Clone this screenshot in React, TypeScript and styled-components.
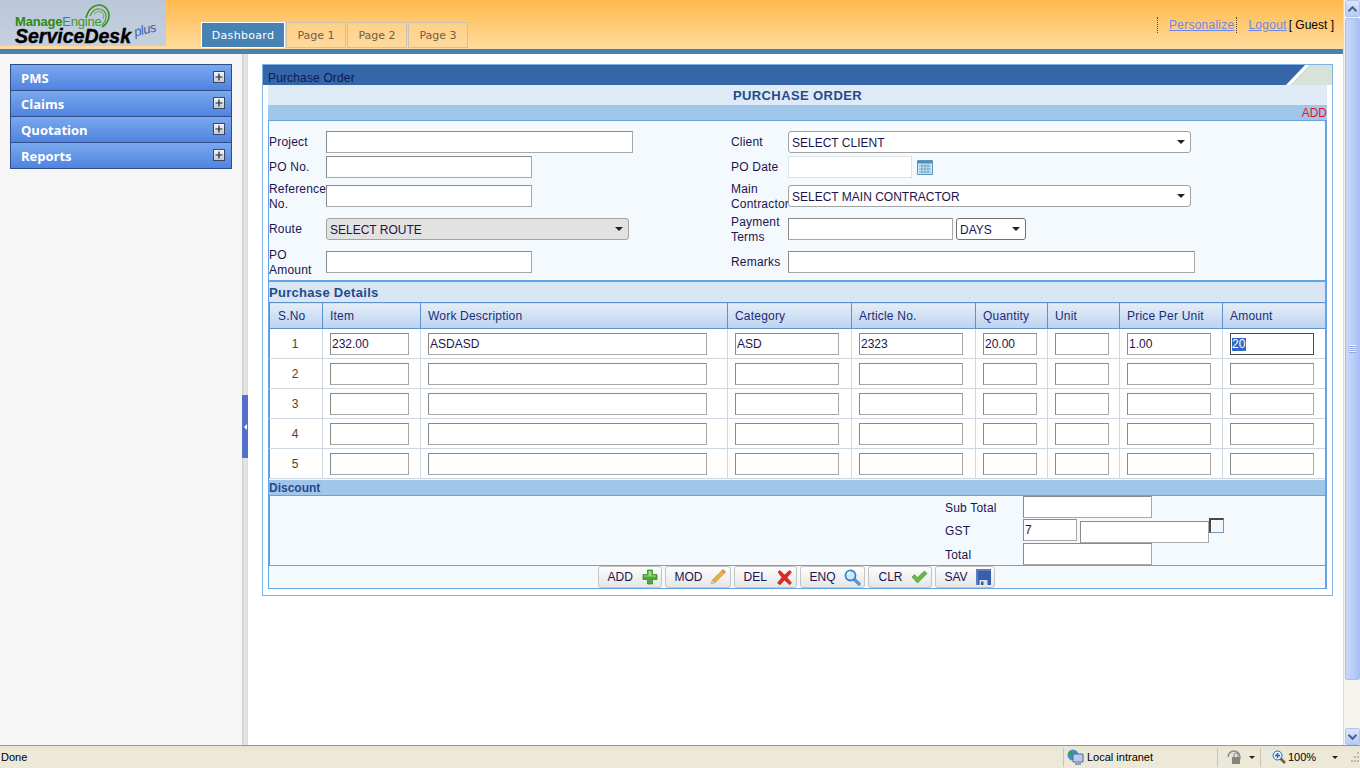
import React from "react";
import styled, { createGlobalStyle } from "styled-components";

const Global = createGlobalStyle`
  html, body { margin: 0; padding: 0; height: 100%; overflow: hidden; background: #fff; }
  body { font-family: "Liberation Sans", Arial, sans-serif; font-size: 12px; color: #1c1450; }
  * { box-sizing: border-box; }
`;

const Screen = styled.div`
  width: 1360px; height: 768px; display: flex; flex-direction: column; overflow: hidden;
`;
const Upper = styled.div`flex: none; height: 745px; display: flex;`;
const Page = styled.div`flex: none; width: 1343px; height: 745px; display: flex; flex-direction: column;`;

const Header = styled.header`
  flex: none; height: 54px; display: flex; align-items: flex-start;
  background: linear-gradient(#ffb94d, #ffdc9e 49px);
  border-bottom: 5px solid #4682b4;
`;
const LogoBox = styled.div`
  flex: none; position: relative; width: 166px; height: 46px; background: linear-gradient(#b9c7da, #c6d0de);
  color: #000; overflow: hidden;
`;
const LogoTop = styled.span`
  position: absolute; left: 15px; top: 16px; font: 700 13px/12px "Liberation Sans", sans-serif;
  color: #2f8a12; letter-spacing: -0.2px;
`;
const LogoTopLight = styled.span`font-weight: 400; color: #3f9a1c;`;
const LogoMain = styled.span`
  position: absolute; left: 15px; top: 28px; font: italic 700 19.5px/17px "Liberation Sans", sans-serif;
  color: #000; -webkit-text-stroke: 0.4px #000;
`;
const LogoPlus = styled.span`
  position: absolute; left: 134px; top: 23px; font: italic 400 13px/14px "Liberation Sans", sans-serif;
  color: #3a63b0; letter-spacing: -0.5px; transform: rotate(-14deg);
`;
const LogoArc = styled.svg`position: absolute; left: 80px; top: 3px;`;

const Tabs = styled.nav`flex: none; display: flex; gap: 1px; margin: 22px 0 0 35px;`;
const Tab = styled.div<{ $active?: boolean }>`
  height: 26px; display: flex; align-items: center; justify-content: center;
  font: 11px "DejaVu Sans", Verdana, sans-serif;
  padding-top: 1px;
  width: ${p => p.$active ? 84 : 60}px;
  ${p => p.$active
    ? "background:#4682b4;color:#fff;border:1px solid #fff;letter-spacing:.3px;"
    : "background:linear-gradient(#ffd08a,#ffd99c);color:#6f5f48;border:1px solid #c9c3ae;"}
`;
const TopLinks = styled.div`
  margin-left: auto; margin-top: 17px; padding-right: 9px; display: flex; align-items: center;
  height: 16px; color: #000; font-size: 12px;
`;
const Dotted = styled.span`
  display: block; width: 1px; height: 16px; border-left: 1px dotted #5b4a25;
`;
const TopLink = styled.a`
  color: #6e86e8; text-decoration: underline; margin: 0 2px 0 11px; letter-spacing: 0.25px;
`;

const Main = styled.div`flex: 1; min-height: 0; display: flex;`;
const Sidebar = styled.aside`flex: none; width: 242px; background: #f6f6f6; padding: 10px 0 0 10px;`;
const Accordion = styled.div`
  width: 222px; border: 1px solid #2f4d86; border-bottom: 0; background: #2f4d86;
  display: flex; flex-direction: column;
`;
const AccItem = styled.div`
  height: 26px; display: flex; align-items: center; justify-content: space-between;
  padding: 0 6px 0 10px;
  background: linear-gradient(#7aa9ee, #4f83e0);
  border-bottom: 1px solid #2f4d86;
  color: #fff; font: 700 13px "Open Sans", sans-serif;
`;
const PlusBox = styled.span`
  width: 12px; height: 12px; margin-top: -1px; background: linear-gradient(#f4f6fa, #c4cada); border: 1px solid #3c4660;
  display: flex; align-items: center; justify-content: center;
`;
const Splitter = styled.div`
  flex: none; position: relative; width: 6px;
  background: linear-gradient(90deg, #cfcfcf, #e8e8e8 50%, #dadada);
`;
const SplitHandle = styled.div`
  position: absolute; left: 0; top: 341px; width: 6px; height: 63px; background: #5470c8;
  display: flex; align-items: center; justify-content: center;
`;
const Arrow = styled.span`
  width: 0; height: 0; border: 3px solid transparent; border-left: 0; border-right: 3px solid #fff;
`;

const Content = styled.main`flex: 1; min-width: 0; padding: 10px 10px 0 14px; background: #fff;`;
const Panel = styled.section`
  width: 1071px; height: 532px; border: 1px solid #7fb2e5; padding: 0 5px; background: #fff;
`;
const TitleBar = styled.div`
  height: 20px; margin: 0 -5px; background: #3566a8; color: #0f1a4a; position: relative;
  font-size: 12px; line-height: 26px; padding-left: 5px; overflow: hidden; letter-spacing: 0.15px;
`;
const TitleCorner = styled.svg`position: absolute; right: 0; top: 0;`;
const FormHead = styled.div`
  height: 20px; padding-top: 1px; background: #deeaf5; color: #254a8c; font: 700 13px/20px "Liberation Sans", sans-serif;
  text-align: center; letter-spacing: 0.4px;
`;
const AddBar = styled.div`
  height: 15px; padding-top: 1px; background: #a0c6ea; color: #ff0a28; font-size: 12px; line-height: 15px; text-align: right;
`;
const FormBody = styled.div`
  height: 469px; border: 1px solid #62a5e2; border-right-width: 2px; background: #f4f9fd;
  display: flex; flex-direction: column; overflow: hidden;
`;
const FormGrid = styled.div`
  flex: none; height: 159px; padding-top: 10px;
  display: grid; grid-template-columns: 462px 1fr; grid-template-rows: 25px 29px 33px 33px 29px;
`;
const Field = styled.div`display: flex; align-items: center; height: 22px;`;
const Label = styled.label<{ $two?: boolean }>`
  flex: none; width: 57px; line-height: 15px; color: #1c1450; white-space: pre; letter-spacing: 0.2px;
  ${p => p.$two ? "padding-top: 2px;" : ""}
`;
const Text = styled.input<{ $w: number; $soft?: boolean }>`
  flex: none; width: ${p => p.$w}px; height: 22px; padding: 1px; margin: 0;
  background: #fff; border: 1px solid ${p => p.$soft ? "#dbe2e8" : "#a8a8a8"};
  border-top-color: ${p => p.$soft ? "#dbe2e8" : "#8a8a8a"}; border-left-color: ${p => p.$soft ? "#dbe2e8" : "#8a8a8a"};
  font: 12px "Liberation Sans", sans-serif; color: #1c1450; border-radius: 0; outline: none;
`;
const Select = styled.div<{ $w: number; $grey?: boolean; $dark?: boolean }>`
  flex: none; position: relative; width: ${p => p.$w}px; height: 22px; border-radius: 3px; padding: 1px 0 0 3px;
  display: flex; align-items: center; color: #1c1450;
  border: 1px solid ${p => p.$dark ? "#707070" : "#a3a3a3"};
  background: ${p => p.$grey ? "#e2e2e2" : "#fff"};
`;
const DaysSelect = styled(Select)`margin-left: 3px;`;
const Caret = styled.span`
  position: absolute; right: 5px; top: 8px; width: 0; height: 0;
  border: 4px solid transparent; border-top: 4px solid #222; border-bottom: 0;
`;
const Cal = styled.svg`flex: none; margin-left: 5px;`;

const SectionBand = styled.div`
  flex: none; height: 22px; background: #d9e7f5; border-top: 2px solid #62a5e2;
  color: #254a8c; font: 700 13px/21px "Liberation Sans", sans-serif; letter-spacing: 0.3px;
`;
const Table = styled.table`
  flex: none; width: 1056px; border-collapse: collapse; table-layout: fixed; background: #fff;
`;
const Th = styled.th`
  height: 26px; padding: 0 0 0 7px; text-align: left; letter-spacing: 0.2px;
  &:first-child { padding-left: 8px; }
  font: 12px "Liberation Sans", sans-serif; color: #1c2c78;
  background: linear-gradient(#e4edf8, #bcd3ef); border: 1px solid #5f90cc;
`;
const Td = styled.td<{ $center?: boolean }>`
  height: 30px; padding: 0 0 0 7px; border: 1px solid #ced8e2;
  &:first-child { border-left: 1px solid #6d99c9; }
  &:last-child { border-right: 1px solid #6d99c9; }
  text-align: ${p => p.$center ? "center" : "left"};
  ${p => p.$center ? "padding:0 2px 0 0;color:#5a3d28;" : ""}
`;
const CellInput = styled(Text)<{ $focus?: boolean }>`
  display: block;
  ${p => p.$focus ? "border:1px solid #4a4a4a;" : ""}
`;
const Selected = styled.span`
  position: absolute; left: 2px; top: 5px; height: 13px; padding: 0 1px 0 0; line-height: 13px;
  background: #316ac5; color: #fff;
`;
const CellWrap = styled.div`position: relative; width: 84px; height: 22px;`;

const DiscountBand = styled.div`
  flex: none; height: 16px; padding-top: 1px; background: #a0c6ea; color: #254a8c; margin-top: 1px;
  font-weight: 700; font-size: 12px; line-height: 15px; border-bottom: 1px solid #62a5e2;
`;
const Totals = styled.div`
  flex: none; height: 70px; background: #f4f9fd; border-left: 1px solid #6d99c9;
  border-bottom: 1px solid #62a5e2; padding: 0 0 0 675px;
  display: grid; grid-template-columns: 78px auto; grid-template-rows: 23px 24px 22px; justify-content: start; align-items: start;
`;
const TotLabel = styled.span`color: #1c1450; padding-top: 1px; line-height: 22px; letter-spacing: 0.2px;`;
const GstRow = styled.div`display: flex; position: relative; align-items: flex-start; gap: 3px;`;
const GstSecond = styled(Text)`margin-top: 2px;`;
const Check = styled.span`
  position: absolute; left: 186px; top: -1px; width: 15px; height: 15px; background: #f4f7fa;
  border: 1px solid #6d99c9; border-top: 2px solid #4a4a40; border-left: 2px solid #4a4a40;
`;
const Buttons = styled.div`
  flex: none; height: 22px; display: flex; justify-content: center; gap: 3px; background: #f4f9fd; padding-right: 2px;
`;
const Btn = styled.button<{ $w: number; $pad: number }>`
  width: ${p => p.$w}px; height: 22px; margin: 0; padding: 0 3px 0 ${p => p.$pad}px; display: flex; align-items: center; justify-content: space-between;
  border: 1px solid #c4c4c4; border-radius: 3px; background: linear-gradient(#fdfdfd, #e6e6e6);
  font: 12px "Liberation Sans", sans-serif; color: #1c1450;
  svg { flex: none; }
`;

const StatusBar = styled.footer`
  flex: none; height: 23px; width: 1360px; display: flex; align-items: center; color: #000; font: 11px/1 "Liberation Sans", "DejaVu Sans", sans-serif;
  background: linear-gradient(#e8e4d4, #ece9d8 6px); border-top: 1px solid #9c9888;
`;
const StatusLeft = styled.span`flex: none; width: 1063px; padding: 1px 0 0 1px; font-size: 11px;`;
const Zone = styled.div<{ $w: number; $pad: number }>`
  flex: none; width: ${p => p.$w}px; height: 19px; display: flex; align-items: center; gap: 2px; padding-left: ${p => p.$pad}px;
  border-left: 1px solid #c8c5b4;
`;
const SmallCaret = styled.span<{ $ml: number }>`
  width: 0; height: 0; margin-left: ${p => p.$ml}px; border: 3px solid transparent; border-top: 3px solid #222; border-bottom: 0;
`;
const GripCorner = styled.svg`flex: none;`;

const Scroll = styled.div`
  flex: none; width: 17px; height: 745px; background: #f5f3ee; display: flex; flex-direction: column;
  border-left: 1px solid #dddad0;
`;
const ScrollBtn = styled.div`
  flex: none; height: 17px; margin: 0 0 0 1px; background: linear-gradient(#dbe6fd, #b6cbf8); border: 1px solid #f0f4ff;
  outline: 1px solid #b0c4ee; outline-offset: -1px; border-radius: 2px; display: flex; align-items: center; justify-content: center;
`;
const Thumb = styled.div`
  flex: none; height: 662px; margin: 1px 0 0 1px; border-radius: 2px; border: 1px solid #a9bff0;
  background: linear-gradient(90deg, #c8d7fb, #b9ccf9 60%, #a9bff3); display: flex; align-items: center; justify-content: center;
`;
const Grip = styled.div`
  width: 7px; height: 8px;
  background: repeating-linear-gradient(#eef3ff 0 1px, #8ca6e4 1px 2px);
`;
const ScrollTrack = styled.div`flex: 1;`;

const Chevron = ({ up }: { up?: boolean }) => (
  <svg width="11" height="8" viewBox="0 0 11 8">
    <path d={up ? "M1.5 6.2 5.5 2.2 9.5 6.2" : "M1.5 1.8 5.5 5.8 9.5 1.8"} fill="none" stroke="#4d6185" strokeWidth="2" />
  </svg>
);

const Plus = () => (
  <svg width="8" height="8" viewBox="0 0 8 8"><path d="M4 .5v7M.5 4h7" stroke="#222" strokeWidth="1.2" /></svg>
);

const AddIcon = () => (
  <svg width="16" height="16" viewBox="0 0 16 16">
    <path d="M5.5 1h5v4.500H15v5h-4.500V15h-5v-4.500H1v-5h4.500z" fill="#4fa63a" stroke="#3c8a2c" strokeWidth=".8" />
    <path d="M6.500 2h3v4.500H14v1H2v-1h4.500z" fill="#9bdc7e" />
  </svg>
);
const ModIcon = () => (
  <svg width="18" height="18" viewBox="0 0 18 18">
    <path d="M14 1.500 16.500 4 6 14.500 3.500 12z" fill="#f0b13c" stroke="#b9812a" strokeWidth=".7" />
    <path d="M14 1.500 16.500 4 15 5.500 12.500 3z" fill="#e0857a" />
    <path d="M3.500 12 6 14.500 2 16z" fill="#efd7b0" stroke="#9a8a70" strokeWidth=".5" />
  </svg>
);
const DelIcon = () => (
  <svg width="17" height="17" viewBox="0 0 17 17">
    <path d="M2 3 4 1.500 8.500 6 13.500 1.500 15.500 3 11 8.500 15.500 14 13.500 15.800 8.500 11 4 15.800 1.500 14 6 8.500z" fill="#e02a20" stroke="#a81a12" strokeWidth=".6" />
  </svg>
);
const EnqIcon = () => (
  <svg width="17" height="17" viewBox="0 0 17 17">
    <path d="M10.500 10.500 15 15" stroke="#5a96d0" strokeWidth="3.400" strokeLinecap="round" />
    <circle cx="6.500" cy="6.500" r="5" fill="#cfe9fb" stroke="#2f86d8" strokeWidth="1.800" />
    <path d="M3.500 6a3 3 0 0 1 3-3" stroke="#fff" strokeWidth="1.300" fill="none" />
  </svg>
);
const ClrIcon = () => (
  <svg width="17" height="14" viewBox="0 0 17 14">
    <path d="M1 7 3.500 4.500 6.500 7.500 13.500 1 16 3.500 6.500 13z" fill="#64b84c" stroke="#4c9a38" strokeWidth=".7" />
  </svg>
);
const SavIcon = () => (
  <svg width="15" height="16" viewBox="0 0 15 16">
    <path d="M0 0h15v16H0z" fill="#3a5fa6" />
    <path d="M0 0h15v2H0zM0 0h2v16H0z" fill="#5c80bd" />
    <path d="M3.500 11h8v5h-8z" fill="#dbe2ee" />
    <path d="M5 12.500h2.500V16H5z" fill="#3a5fa6" />
  </svg>
);
const CalIcon = () => (
  <Cal width="16" height="16" viewBox="0 0 16 16">
    <path d="M.5 1.500h15v14H.5z" fill="#d5e8f5" stroke="#5a94bc" />
    <path d="M1 2h14v2.500H1z" fill="#4f8fb9" />
    <path d="M2 7h12M2 10h12M2 13h12M5 5v9.500M8 5v9.500M11 5v9.500" stroke="#6ea5c9" />
  </Cal>
);

const columns = [
  ["S.No", 53], ["Item", 98], ["Work Description", 307], ["Category", 124], ["Article No.", 124],
  ["Quantity", 72], ["Unit", 72], ["Price Per Unit", 103], ["Amount", 103],
] as const;
const inputWidths = [79, 279, 104, 104, 54, 54, 84, 84];
const firstRow = ["232.00", "ASDASD", "ASD", "2323", "20.00", "", "1.00"];

export default function App() {
  return (
    <Screen>
      <Global />
      <Upper>
        <Page>
          <Header>
            <LogoBox>
              <LogoArc width="32" height="28" viewBox="0 0 32 28">
                <path d="M6 15C8 6 14 2 19 2c6 0 10 5 10 11 0 4-3 9-7 11" fill="none" stroke="#3f8f1f" strokeWidth="1.600" />
                <path d="M10 13c2-5 6-8 10-7 5 1 6 5 6 8 0 3-2 6-4 8" fill="none" stroke="#4f9f2f" strokeWidth="1.200" />
                <path d="M14 11c2-2 5-3 7-2 3 1 3 4 2 7" fill="none" stroke="#6ab04a" strokeWidth="1" />
              </LogoArc>
              <LogoTop>Manage<LogoTopLight>Engine</LogoTopLight></LogoTop>
              <LogoMain>ServiceDesk</LogoMain>
              <LogoPlus>plus</LogoPlus>
            </LogoBox>
            <Tabs>
              <Tab $active>Dashboard</Tab>
              <Tab>Page 1</Tab>
              <Tab>Page 2</Tab>
              <Tab>Page 3</Tab>
            </Tabs>
            <TopLinks>
              <Dotted />
              <TopLink>Personalize</TopLink>
              <Dotted />
              <TopLink>Logout</TopLink>
              <span>[ Guest ]</span>
            </TopLinks>
          </Header>
          <Main>
            <Sidebar>
              <Accordion>
                {["PMS", "Claims", "Quotation", "Reports"].map(t => (
                  <AccItem key={t}>{t}<PlusBox><Plus /></PlusBox></AccItem>
                ))}
              </Accordion>
            </Sidebar>
            <Splitter><SplitHandle><Arrow /></SplitHandle></Splitter>
            <Content>
              <Panel>
                <TitleBar>
                  Purchase Order
                  <TitleCorner width="46" height="20" viewBox="0 0 46 20">
                    <path d="M5 20 24 0H46V20z" fill="#d7e2d8" />
                    <path d="M0 20 19 0H24L5 20z" fill="#fff" />
                  </TitleCorner>
                </TitleBar>
                <FormHead>PURCHASE ORDER</FormHead>
                <AddBar>ADD</AddBar>
                <FormBody>
                  <FormGrid>
                    <Field><Label>Project</Label><Text $w={307} /></Field>
                    <Field><Label>Client</Label><Select $w={403}>SELECT CLIENT<Caret /></Select></Field>
                    <Field><Label>PO No.</Label><Text $w={206} /></Field>
                    <Field><Label>PO Date</Label><Text $w={124} $soft /><CalIcon /></Field>
                    <Field><Label $two>{"Reference\nNo."}</Label><Text $w={206} /></Field>
                    <Field><Label $two>{"Main\nContractor"}</Label><Select $w={403}>SELECT MAIN CONTRACTOR<Caret /></Select></Field>
                    <Field><Label>Route</Label><Select $w={303} $grey>SELECT ROUTE<Caret /></Select></Field>
                    <Field><Label $two>{"Payment\nTerms"}</Label><Text $w={165} /><DaysSelect $w={70} $dark>DAYS<Caret /></DaysSelect></Field>
                    <Field><Label $two>{"PO\nAmount"}</Label><Text $w={206} /></Field>
                    <Field><Label>Remarks</Label><Text $w={407} /></Field>
                  </FormGrid>
                  <SectionBand>Purchase Details</SectionBand>
                  <Table>
                    <colgroup>{columns.map(([n, w]) => <col key={n} width={w} />)}</colgroup>
                    <thead>
                      <tr>{columns.map(([n]) => <Th key={n}>{n}</Th>)}</tr>
                    </thead>
                    <tbody>
                      {[1, 2, 3, 4, 5].map(r => (
                        <tr key={r}>
                          <Td $center>{r}</Td>
                          {inputWidths.map((w, i) => (
                            <Td key={i}>
                              {r === 1 && i === 7 ? (
                                <CellWrap>
                                  <CellInput $w={w} $focus />
                                  <Selected>20</Selected>
                                </CellWrap>
                              ) : (
                                <CellInput $w={w} defaultValue={r === 1 ? firstRow[i] : ""} />
                              )}
                            </Td>
                          ))}
                        </tr>
                      ))}
                    </tbody>
                  </Table>
                  <DiscountBand>Discount</DiscountBand>
                  <Totals>
                    <TotLabel>Sub Total</TotLabel><Text $w={129} />
                    <TotLabel>GST</TotLabel>
                    <GstRow><Text $w={54} defaultValue="7" /><GstSecond $w={129} /><Check /></GstRow>
                    <TotLabel>Total</TotLabel><Text $w={129} />
                  </Totals>
                  <Buttons>
                    <Btn $w={64} $pad={9}>ADD<AddIcon /></Btn>
                    <Btn $w={66} $pad={9}>MOD<ModIcon /></Btn>
                    <Btn $w={63} $pad={9}>DEL<DelIcon /></Btn>
                    <Btn $w={65} $pad={9}>ENQ<EnqIcon /></Btn>
                    <Btn $w={64} $pad={10}>CLR<ClrIcon /></Btn>
                    <Btn $w={60} $pad={9}>SAV<SavIcon /></Btn>
                  </Buttons>
                </FormBody>
              </Panel>
            </Content>
          </Main>
        </Page>
        <Scroll>
          <ScrollBtn><Chevron up /></ScrollBtn>
          <Thumb><Grip /></Thumb>
          <ScrollTrack />
          <ScrollBtn><Chevron /></ScrollBtn>
        </Scroll>
      </Upper>
      <StatusBar>
        <StatusLeft>Done</StatusLeft>
        <Zone $w={154} $pad={3}>
          <svg width="18" height="17" viewBox="0 0 18 17">
            <circle cx="6" cy="6" r="5.500" fill="#3f8fd0" />
            <path d="M2 3c2-1 4 0 4 2s-3 3-4 1z" fill="#3aa33a" />
            <path d="M6 5h10v8H6z" fill="#b9cce8" stroke="#4d6aa0" />
            <path d="M8 14h6v2H8z" fill="#8aa0c8" />
          </svg>
          Local intranet
        </Zone>
        <Zone $w={43} $pad={8}>
          <svg width="17" height="16" viewBox="0 0 17 16">
            <path d="M2 8a6 6 0 1 1 6 6" fill="#e4e4e0" stroke="#8a8a84" strokeWidth="1.500" />
            <path d="M6 8h8v7H6z" fill="#85857f" />
            <path d="M8 8V6a2 2 0 0 1 4 0v2" fill="none" stroke="#85857f" />
          </svg>
          <SmallCaret $ml={4} />
        </Zone>
        <Zone $w={90} $pad={11}>
          <svg width="14" height="14" viewBox="0 0 14 14">
            <path d="M8 8l5 5" stroke="#7a5a30" strokeWidth="2.500" />
            <circle cx="5.500" cy="5.500" r="4.500" fill="#dfeefb" stroke="#2e63b8" />
            <path d="M5.500 3v5M3 5.500h5" stroke="#2e63b8" strokeWidth="1.500" />
          </svg>
          100%
          <SmallCaret $ml={14} />
        </Zone>
        <GripCorner width="10" height="12" viewBox="0 0 10 12">
          <path d="M7 1h2v2H7zM4 5h2v2H4zM7 5h2v2H7zM1 9h2v2H1zM4 9h2v2H4zM7 9h2v2H7z" fill="#bdb9a6" />
        </GripCorner>
      </StatusBar>
    </Screen>
  );
}
